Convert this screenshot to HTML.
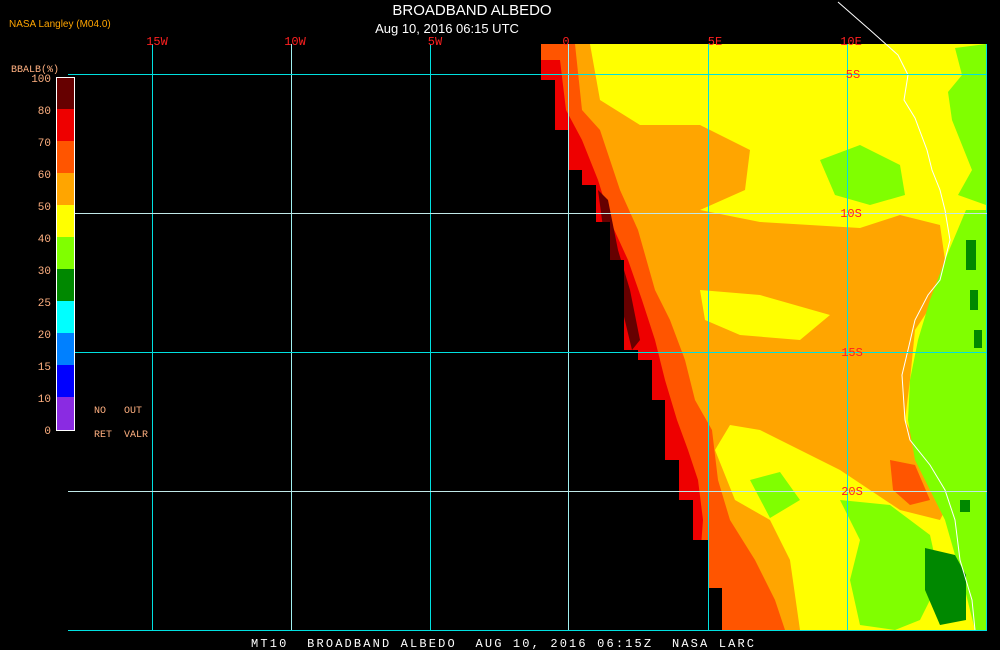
<!DOCTYPE html>
<html><head><meta charset="utf-8"><style>
html,body{margin:0;padding:0;background:#000;width:1000px;height:650px;overflow:hidden}
svg{display:block}
text{font-family:"Liberation Mono","DejaVu Sans Mono",monospace}
</style></head><body>
<svg width="1000" height="650" viewBox="0 0 1000 650" xmlns="http://www.w3.org/2000/svg">
<rect width="1000" height="650" fill="#000"/>
<defs><clipPath id="d"><polygon points="541,44 541,80 555,80 555,130 569,130 569,170 582,170 582,185 596,185 596,222 610,222 610,260 624,260 624,350 638,350 638,360 652,360 652,400 665,400 665,460 679,460 679,500 693,500 693,540 708,540 708,588 722,588 722,630 986,630 986,44"/></clipPath></defs>
<g clip-path="url(#d)">
<rect x="530" y="40" width="460" height="600" fill="#ffff00"/>
<!-- orange -->
<polygon fill="#ffa500" points="541,44 590,44 600,100 640,125 700,125 750,150 745,190 700,210 760,222 860,228 900,215 940,225 945,260 935,300 915,330 910,380 905,420 930,470 950,500 940,520 900,510 870,490 840,470 800,450 760,430 730,425 715,450 735,500 770,520 790,560 800,630 541,630"/>
<polygon fill="#ffff00" points="700,290 760,295 830,315 800,340 740,335 705,320"/>
<polygon fill="#ffff00" points="620,60 660,70 680,95 640,105 615,90"/>
<polygon fill="#ff5500" points="1010,470 1050,470 1075,510 1060,520 1020,505"/>
<!-- red-orange -->
<polygon fill="#ff5500" points="541,44 575,44 582,110 600,130 620,190 638,230 655,290 670,320 685,360 695,400 712,430 718,480 730,520 755,560 775,600 785,630 541,630"/>
<polygon fill="#ff5500" points="890,460 915,465 930,500 910,505 893,490"/>
<!-- red -->
<polygon fill="#ee0000" points="541,60 560,60 566,110 582,140 598,180 612,225 628,260 642,300 655,340 665,380 677,420 688,450 698,480 703,520 700,560 712,630 541,630"/>
<polygon fill="#660000" points="598,190 608,200 618,250 630,290 640,340 632,350 620,300 606,250"/>
<!-- greens -->
<polygon fill="#80ff00" points="986,44 955,48 962,75 948,92 952,120 972,170 958,195 986,205"/>
<polygon fill="#80ff00" points="966,210 986,210 986,630 975,630 965,590 955,555 945,520 930,490 915,460 908,420 910,380 918,340 930,300 945,260"/>
<polygon fill="#80ff00" points="820,160 860,145 900,165 905,195 870,205 835,195"/>
<polygon fill="#80ff00" points="840,500 890,505 930,535 940,580 920,620 895,630 860,625 850,580 860,540"/>
<polygon fill="#80ff00" points="750,480 780,472 800,500 770,518"/>
<polygon fill="#008800" points="925,548 955,555 966,575 966,620 940,625 925,590"/>
<g fill="#008800"><rect x="966" y="240" width="10" height="30"/><rect x="970" y="290" width="8" height="20"/><rect x="974" y="330" width="8" height="18"/><rect x="960" y="500" width="10" height="12"/></g>
</g>
<!-- coast -->
<polyline fill="none" stroke="#fff" stroke-width="1" points="838,2 870,30 898,55 908,75 904,100 915,118 927,150 932,170 940,190 945,210 950,240 945,260 940,280 928,295 915,320 908,350 902,375 905,420 910,440 930,465 945,490 955,520 960,560 972,600 975,630"/>
<!-- grid -->
<g stroke="#00e0e0" stroke-width="1">
<line x1="152.5" y1="44" x2="152.5" y2="630"/>
<line x1="291.5" y1="44" x2="291.5" y2="630" stroke="#a0f0f0"/>
<line x1="430.5" y1="44" x2="430.5" y2="630"/>
<line x1="568.5" y1="44" x2="568.5" y2="630" stroke="#a0f0f0"/>
<line x1="708.5" y1="44" x2="708.5" y2="630"/>
<line x1="847.5" y1="44" x2="847.5" y2="630"/>
<line x1="986.5" y1="44" x2="986.5" y2="630"/>
<line x1="68" y1="74.5" x2="987" y2="74.5"/>
<line x1="68" y1="213.5" x2="987" y2="213.5" stroke="#c0e8e8"/>
<line x1="68" y1="352.5" x2="987" y2="352.5"/>
<line x1="68" y1="491.5" x2="987" y2="491.5" stroke="#c0e8e8"/>
<line x1="68" y1="630.5" x2="987" y2="630.5"/>
</g>
<!-- labels -->
<g fill="#ff2020" font-size="12" text-anchor="middle">
<text x="157" y="45">15W</text><text x="295" y="45">10W</text><text x="435" y="45">5W</text><text x="566" y="45">0</text><text x="715" y="45">5E</text><text x="851" y="45">10E</text>
<text x="853" y="78">5S</text><text x="851" y="217">10S</text><text x="852" y="356">15S</text><text x="852" y="495">20S</text>
</g>
<text x="472" y="15" fill="#fff" font-size="15" text-anchor="middle" style="font-family:'Liberation Sans',sans-serif">BROADBAND ALBEDO</text>
<text x="447" y="33" fill="#fff" font-size="13" text-anchor="middle" style="font-family:'Liberation Sans',sans-serif">Aug 10, 2016 06:15 UTC</text>
<text x="9" y="27" fill="#ffa500" font-size="10" style="font-family:'Liberation Sans',sans-serif">NASA Langley (M04.0)</text>
<text x="11" y="72" fill="#ffb080" font-size="10">BBALB(%)</text>
<g>
<rect x="56" y="77" width="18" height="32" fill="#660000"/>
<rect x="56" y="109" width="18" height="32" fill="#ee0000"/>
<rect x="56" y="141" width="18" height="32" fill="#ff5500"/>
<rect x="56" y="173" width="18" height="32" fill="#ffa500"/>
<rect x="56" y="205" width="18" height="32" fill="#ffff00"/>
<rect x="56" y="237" width="18" height="32" fill="#80ff00"/>
<rect x="56" y="269" width="18" height="32" fill="#008800"/>
<rect x="56" y="301" width="18" height="32" fill="#00ffff"/>
<rect x="56" y="333" width="18" height="32" fill="#0080ff"/>
<rect x="56" y="365" width="18" height="32" fill="#0000ff"/>
<rect x="56" y="397" width="18" height="33" fill="#8a2be2"/>
<rect x="56.5" y="77.5" width="18" height="353" fill="none" stroke="#fff"/>
</g>
<g fill="#ffb080" font-size="11" text-anchor="end">
<text x="51" y="82">100</text><text x="51" y="114">80</text><text x="51" y="146">70</text><text x="51" y="178">60</text><text x="51" y="210">50</text><text x="51" y="242">40</text><text x="51" y="274">30</text><text x="51" y="306">25</text><text x="51" y="338">20</text><text x="51" y="370">15</text><text x="51" y="402">10</text><text x="51" y="434">0</text>
</g>
<g fill="#ffb080" font-size="10">
<text x="94" y="413">NO</text><text x="124" y="413">OUT</text><text x="94" y="437">RET</text><text x="124" y="437">VALR</text>
</g>
<text x="251" y="647" fill="#fff" font-size="12" xml:space="preserve" textLength="503">MT10  BROADBAND ALBEDO  AUG 10, 2016 06:15Z  NASA LARC</text>
</svg>
</body></html>
